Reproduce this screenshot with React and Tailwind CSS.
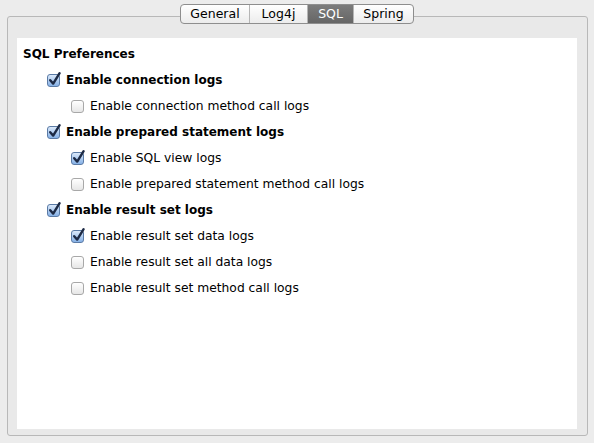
const tabs = [
  { label: "General", w: "w-[68px]" },
  { label: "Log4j", w: "w-[58px]" },
  { label: "SQL", w: "w-[46px]", active: true },
  { label: "Spring", w: "w-[60px]" },
];

const options = [
  { label: "Enable connection logs", level: 1, checked: true },
  { label: "Enable connection method call logs", level: 2, checked: false },
  { label: "Enable prepared statement logs", level: 1, checked: true },
  { label: "Enable SQL view logs", level: 2, checked: true },
  { label: "Enable prepared statement method call logs", level: 2, checked: false },
  { label: "Enable result set logs", level: 1, checked: true },
  { label: "Enable result set data logs", level: 2, checked: true },
  { label: "Enable result set all data logs", level: 2, checked: false },
  { label: "Enable result set method call logs", level: 2, checked: false },
];

const Checkbox = ({ checked }) =>
  checked ? (
    <span className="relative block size-[13px] shrink-0 rounded-[3px] border border-[#5b7ba6] bg-gradient-to-b from-[#dbe9fa] to-[#86b1e6]">
      <svg
        className="absolute left-[-1px] top-[-4px] overflow-visible"
        width="15"
        height="16"
        viewBox="0 0 15 16"
      >
        <path
          d="M3.2 9.2 L6.2 12.6 L12.6 2.2"
          fill="none"
          stroke="#1d2a45"
          strokeWidth="2.4"
          strokeLinecap="round"
          strokeLinejoin="round"
        />
      </svg>
    </span>
  ) : (
    <span className="block size-[13px] shrink-0 rounded-[3px] border border-[#a8a8a8] bg-gradient-to-b from-white to-[#e6e6e6]" />
  );

export default function App() {
  return (
    <div className="w-[594px] h-[443px] bg-[#ececec] pt-[4px] font-['DejaVu_Sans',sans-serif] text-[12.5px] text-black">
      <div className="relative z-10 ml-[180px] flex h-[20px] w-fit rounded-[4px] border border-[#8e8e8e] bg-gradient-to-b from-white to-[#ececec] overflow-hidden">
        {tabs.map((t, i) => (
          <div
            key={t.label}
            className={`${t.w} flex items-center justify-center leading-none ${
              i > 0 ? "border-l border-[#b5b5b5]" : ""
            } ${t.active ? "bg-gradient-to-b from-[#7c7c7c] to-[#666666] text-white" : ""}`}
          >
            {t.label}
          </div>
        ))}
      </div>

      <div className="-mt-[8px] ml-[7px] h-[420px] w-[581px] rounded-[3px] border border-[#b8b8b8] bg-[#e9e9e9] pl-[9px] pr-[10px] pt-[21px] pb-[6px]">
        <div className="h-full w-full bg-white pt-[3px]">
          <div className="flex h-[26px] items-center pl-[6px] text-[12px] font-bold">
            SQL Preferences
          </div>
          {options.map((o) => (
            <div
              key={o.label}
              className={`flex h-[26px] items-center gap-[6px] ${
                o.level === 1
                  ? "pl-[30px] text-[12px] font-bold"
                  : "pl-[54px] text-[12.3px]"
              }`}
            >
              <Checkbox checked={o.checked} />
              <span>{o.label}</span>
            </div>
          ))}
        </div>
      </div>
    </div>
  );
}
